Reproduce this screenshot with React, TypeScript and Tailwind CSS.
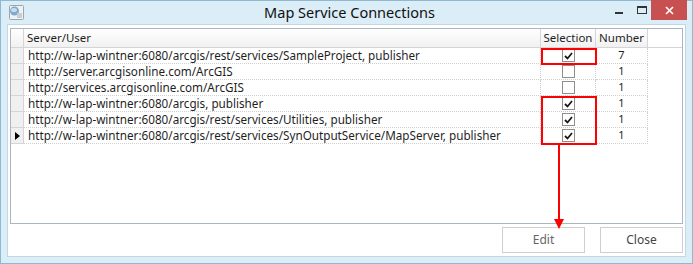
import React from 'react';

const rows = [
  { url: 'http://w-lap-wintner:6080/arcgis/rest/services/SampleProject, publisher', checked: true, n: 7 },
  { url: 'http://server.arcgisonline.com/ArcGIS', checked: false, n: 1 },
  { url: 'http://services.arcgisonline.com/ArcGIS', checked: false, n: 1 },
  { url: 'http://w-lap-wintner:6080/arcgis, publisher', checked: true, n: 1 },
  { url: 'http://w-lap-wintner:6080/arcgis/rest/services/Utilities, publisher', checked: true, n: 1 },
  { url: 'http://w-lap-wintner:6080/arcgis/rest/services/SynOutputService/MapServer, publisher', checked: true, n: 1, current: true },
];

function CheckBox({ checked }: { checked: boolean }) {
  return (
    <div className="w-[13px] h-[13px] border border-[#8f8f8f] bg-white flex items-center justify-center">
      {checked && (
        <svg width="9" height="8" viewBox="0 0 9 8">
          <path d="M1 4 L3.5 6.5 L8 1" fill="none" stroke="#1a1a1a" strokeWidth="1.8" />
        </svg>
      )}
    </div>
  );
}

export default function App() {
  return (
    <div
      className="relative w-[693px] h-[264px] bg-[#dbedf7] border border-[#8fb8d2] flex flex-col text-[#1f1f1f]"
      style={{ fontFamily: '"Noto Sans", "Open Sans", Arial, sans-serif' }}
    >
      {/* Title bar */}
      <div className="relative h-[23px] shrink-0 flex items-center justify-center">
        <svg className="absolute left-[7px] top-[3px]" width="17" height="17" viewBox="0 0 17 17">
          <rect x="1.5" y="1.5" width="14" height="14" rx="1" fill="#eef2f4" stroke="#9aa6ad" />
          <circle cx="6.5" cy="7" r="4.5" fill="#7fa8cc" />
          <ellipse cx="6" cy="6" rx="3" ry="2" fill="#c9dcec" />
          <rect x="9" y="9" width="5" height="5" fill="#c8cfd3" />
        </svg>
        <span className="text-[14.5px] text-[#111] mt-[1px] ml-[6px]">Map Service Connections</span>
        <div className="absolute left-[614px] top-[11px] w-[8px] h-[2px] bg-[#333]" />
        <div className="absolute left-[636px] top-[5px] w-[10px] h-[8px] border border-[#333] border-t-2" />
        <div className="absolute left-[650px] top-[-1px] w-[36px] h-[20px] bg-[#c75050] flex items-center justify-center">
          <svg width="9" height="9" viewBox="0 0 9 9">
            <path d="M1 1 L8 8 M8 1 L1 8" stroke="#fff" strokeWidth="1.6" />
          </svg>
        </div>
      </div>

      {/* Client area */}
      <div className="mx-[6px] h-[233px] bg-white border border-[#c4d6e2] flex flex-col pt-[3px] px-[2px]">
        <div className="relative h-[196px] border border-[#a9b6c0] text-[11.7px]">
          {/* header */}
          <div className="flex h-[19px] border-b border-[#d5d5d5]">
            <div className="w-[13px] bg-gradient-to-b from-white to-[#f1f1f1] border-r border-[#d5d5d5]" />
            <div className="w-[517px] px-[3px] flex items-center bg-gradient-to-b from-white to-[#f1f1f1] border-r border-[#d5d5d5] text-[11.5px]">Server/User</div>
            <div className="w-[55px] flex items-center justify-center bg-gradient-to-b from-white to-[#f1f1f1] border-r border-[#d5d5d5] text-[11.5px]">Selection</div>
            <div className="w-[52px] flex items-center justify-center bg-gradient-to-b from-white to-[#f1f1f1] border-r border-[#d5d5d5] text-[11.5px]">Number</div>
          </div>
          {rows.map((r, i) => (
            <div key={i} className="flex h-[16px]">
              <div className="w-[13px] bg-[#f0f0f0] border-r border-b border-[#d5d5d5] flex items-center justify-center">
                {r.current && (
                  <svg width="5" height="8" viewBox="0 0 5 8">
                    <path d="M0 0 L5 4 L0 8 Z" fill="#000" />
                  </svg>
                )}
              </div>
              <div className="w-[517px] px-[4px] flex items-center border-r border-b border-dotted border-[#cfcfcf] whitespace-nowrap">{r.url}</div>
              <div className="w-[55px] flex items-center justify-center border-r border-b border-dotted border-[#cfcfcf]">
                <CheckBox checked={r.checked} />
              </div>
              <div className="w-[52px] flex items-center justify-center border-r border-b border-dotted border-[#cfcfcf] text-[11px]">{r.n}</div>
            </div>
          ))}

          {/* annotations */}
          <div className="absolute left-[530px] top-[19px] w-[56px] h-[17px] border-2 border-[#ff0000]" />
          <div className="absolute left-[530px] top-[67px] w-[56px] h-[49px] border-2 border-[#ff0000]" />
          <div className="absolute left-[547px] top-[116px] w-[2px] h-[77px] bg-[#ff0000]" />
        </div>

        {/* buttons */}
        <div className="flex justify-end gap-[15px] mt-[3px]">
          <div className="relative w-[83px] h-[26px] border border-[#cfcfcf] bg-white flex items-center justify-center text-[12px] text-[#666]">
            Edit
            <svg className="absolute left-[51px] top-[-9px]" width="10" height="10" viewBox="0 0 10 10">
              <path d="M0 0 L10 0 L5 10 Z" fill="#ff0000" />
            </svg>
          </div>
          <div className="w-[83px] h-[26px] border border-[#cfcfcf] bg-white flex items-center justify-center text-[12px] text-[#444]">Close</div>
        </div>
      </div>
    </div>
  );
}
